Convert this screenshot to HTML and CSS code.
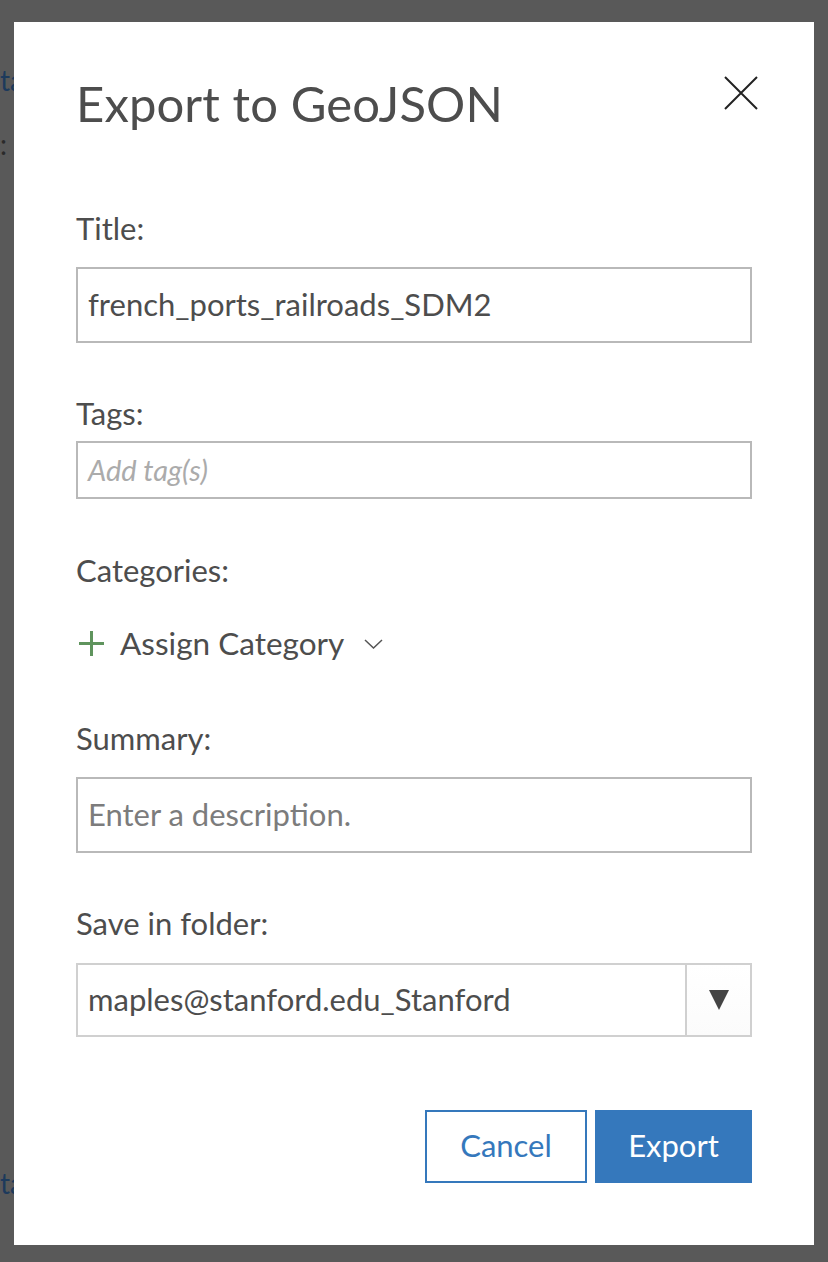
FILE: index.html
```html
<!DOCTYPE html>
<html>
<head>
<meta charset="utf-8">
<link rel="stylesheet" href="styles.css">
</head>
<body>
<div class="backdrop">
  <span class="bg-text bg-1">ta</span>
  <span class="bg-text bg-2">:</span>
  <span class="bg-text bg-3">ta</span>
</div>
<div class="dialog">
  <div class="header">
    <h1 class="title">Export to GeoJSON</h1>
    <button class="close" aria-label="Close">
      <svg width="34" height="34" viewBox="0 0 34 34"><path d="M1 1 L33 33 M33 1 L1 33" stroke="#222" stroke-width="2" fill="none"/></svg>
    </button>
  </div>
  <div class="field f-title">
    <label class="label">Title:</label>
    <div class="input tall">french_ports_railroads_SDM2</div>
  </div>
  <div class="field f-tags">
    <label class="label">Tags:</label>
    <div class="input short placeholder-italic">Add tag(s)</div>
  </div>
  <div class="field f-cat">
    <label class="label">Categories:</label>
    <div class="assign">
      <svg class="plus" width="25" height="25" viewBox="0 0 25 25"><path d="M12.5 0 V25 M0 12.5 H25" stroke="#5f945d" stroke-width="3" fill="none"/></svg>
      <span class="assign-text">Assign Category</span>
      <svg class="chev" width="19" height="10" viewBox="0 0 19 10"><path d="M1 1 L9.5 9 L18 1" stroke="#555" stroke-width="1.5" fill="none"/></svg>
    </div>
  </div>
  <div class="field f-sum">
    <label class="label">Summary:</label>
    <div class="input tall placeholder">Enter a description.</div>
  </div>
  <div class="field f-folder">
    <label class="label">Save in folder:</label>
    <div class="select">
      <span class="select-text">maples@stanford.edu_Stanford</span>
      <span class="select-btn"><svg width="20" height="20" viewBox="0 0 20 20"><path d="M0 0 H20 L10 20 Z" fill="#444"/></svg></span>
    </div>
  </div>
  <div class="actions">
    <button class="btn btn-cancel">Cancel</button>
    <button class="btn btn-export">Export</button>
  </div>
</div>
</body>
</html>
```

FILE: styles.css
```css
html, body {
  margin: 0;
  padding: 0;
}
body {
  width: 828px;
  height: 1262px;
  background: #595959;
  font-family: Lato, "Noto Sans", sans-serif;
  position: relative;
  overflow: hidden;
}
.backdrop {
  position: absolute;
  inset: 0;
}
.bg-text {
  position: absolute;
  left: 0;
  color: #1d3a5c;
  font-size: 28px;
  line-height: 32px;
}
.bg-1 { top: 64px; }
.bg-2 { top: 128px; color: #2a2a2a; }
.bg-3 { top: 1167px; }
.dialog {
  position: absolute;
  left: 14px;
  top: 22px;
  width: 800px;
  height: 1223px;
  background: #fff;
  box-sizing: border-box;
  padding: 0 62px;
  display: flex;
  flex-direction: column;
}
.header {
  display: flex;
  justify-content: space-between;
  align-items: flex-start;
  height: 187px;
}
.title {
  margin: 52px 0 0 0;
  font-weight: 400;
  font-size: 49px;
  color: #4d4d4d;
  line-height: 58px;
  letter-spacing: 0.1px;
}
.close {
  border: 0;
  background: none;
  padding: 0;
  margin: 54px -6px 0 0;
  width: 34px;
  height: 34px;
  cursor: pointer;
}
.field {
  display: flex;
  flex-direction: column;
}
.label {
  font-size: 31px;
  color: #4d4d4d;
  line-height: 38px;
  margin-bottom: 20px;
}
.input {
  border: 2px solid #b9b9b9;
  box-sizing: border-box;
  font-size: 31px;
  color: #4d4d4d;
  padding: 0 10px 2px 10px;
  display: flex;
  align-items: center;
}
.tall { height: 76px; }
.short { height: 58px; }
.placeholder-italic {
  font-style: italic;
  color: #ababab;
  font-size: 29px;
}
.placeholder { color: #7c7c7c; }
.f-tags { margin-top: 51px; }
.f-tags .label { margin-bottom: 9px; }
.f-cat { margin-top: 52px; }
.f-cat .label { margin-bottom: 34px; }
.f-sum { margin-top: 56px; }
.f-folder { margin-top: 51px; }
.f-folder .label { margin-bottom: 21px; }
.assign {
  display: flex;
  align-items: center;
  height: 40px;
}
.plus { margin-left: 3px; margin-right: 16px; }
.assign-text { font-size: 31.5px; color: #4d4d4d; }
.chev { margin-left: 20px; margin-top: 2px; }
.select {
  display: flex;
  height: 74px;
  border: 2px solid #d0d0d0;
  box-sizing: border-box;
}
.select-text {
  flex: 1;
  display: flex;
  align-items: center;
  padding-left: 10px;
  padding-bottom: 2px;
  font-size: 31px;
  color: #4d4d4d;
}
.select-btn {
  width: 63px;
  border-left: 2px solid #d0d0d0;
  background: linear-gradient(#ffffff, #fbfbfb);
  display: flex;
  align-items: center;
  justify-content: center;
}
.actions {
  display: flex;
  justify-content: flex-end;
  gap: 8px;
  margin-top: 73px;
}
.btn {
  height: 73px;
  font-family: inherit;
  font-size: 31px;
  box-sizing: border-box;
  cursor: pointer;
  padding: 0 0 4px 0;
}
.btn-cancel {
  width: 162px;
  background: #fff;
  border: 2px solid #3578bc;
  color: #3578bc;
}
.btn-export {
  width: 157px;
  background: #3578bc;
  border: 2px solid #3578bc;
  color: #fff;
}
```
